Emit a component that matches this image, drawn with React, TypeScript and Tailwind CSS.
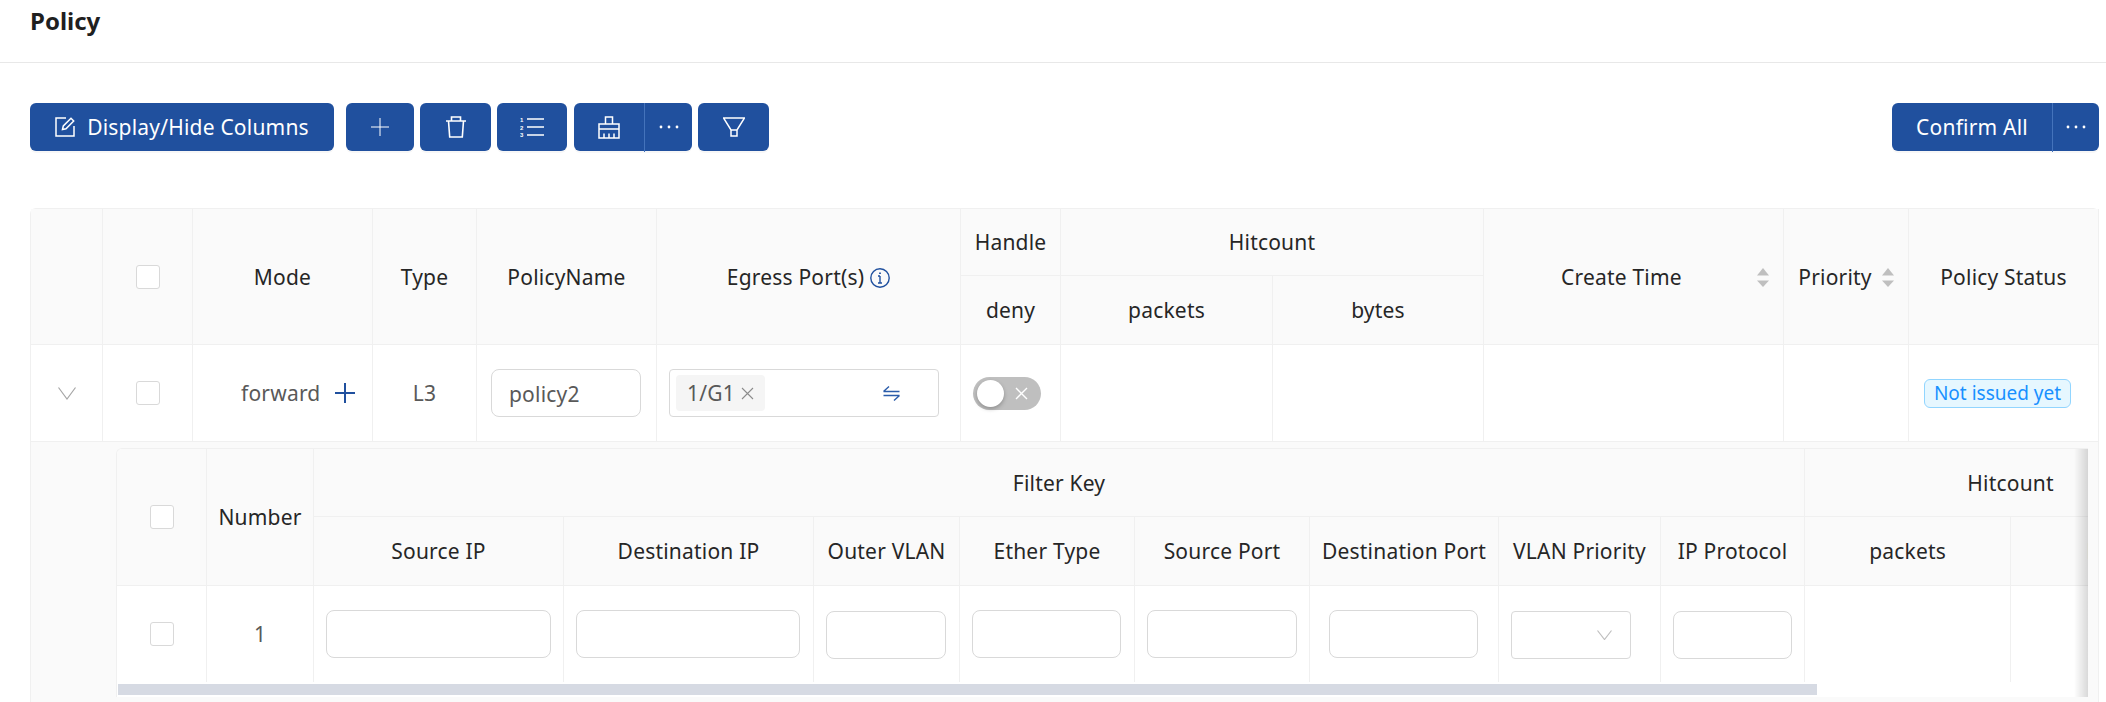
import React from "react";

const outerCols = [72, 90, 180, 104, 180, 304, 100, 212, 211, 300, 125, 190];
const innerCols = [90, 107, 250, 250, 146, 175, 175, 189, 162, 144, 206, 206];

const thBox = "bg-[#fafafa] border-r border-b border-[#f0f0f0] font-normal text-center p-0";
const th = "bg-[#fafafa] border-r border-b border-[#f0f0f0] font-normal text-[21px] tracking-[0.2px] text-[#262626] text-center p-0 pt-[2px] whitespace-nowrap";
const td = "border-r border-b border-[#f0f0f0] text-[21px] tracking-[0.2px] text-[#595959] p-0";
const btn = "h-[48px] bg-[#20509e] rounded-[6px] shadow-[0_2px_0_rgba(0,0,0,0.03)] text-white flex items-center justify-center";

// campos de la tabla anidada
const filterInputs = [
	{ key: "source-ip", cls: "ml-[12px] w-[225px] h-[48px]" },
	{ key: "dest-ip", cls: "ml-[12px] w-[224px] h-[48px]" },
	{ key: "outer-vlan", cls: "ml-[12px] w-[120px] h-[48px] mt-[2px]" },
	{ key: "ether-type", cls: "ml-[12px] w-[149px] h-[48px]" },
	{ key: "source-port", cls: "ml-[12px] w-[150px] h-[48px]" },
	{ key: "dest-port", cls: "ml-[19px] w-[149px] h-[48px]" },
];

function Checkbox() {
	return <span className="block mx-auto w-[24px] h-[24px] bg-white border border-[#d9d9d9] rounded-[3px]" />;
}

function Input({ className, value }: { className: string; value?: string }) {
	return (
		<input
			readOnly
			value={value ?? ""}
			className={`block bg-white border border-[#d9d9d9] rounded-[8px] text-[21px] tracking-[0.2px] text-[#595959] px-[17px] pt-[2px] outline-none ${className}`}
		/>
	);
}

function SortArrows() {
	return (
		<svg width="12" height="19" viewBox="0 0 12 19" className="fill-[#bfbfbf]">
			<path d="M6 0 12 7.5H0Z" />
			<path d="M0 12.5H12L6 19Z" />
		</svg>
	);
}

function Dots() {
	return (
		<svg width="20" height="4" viewBox="0 0 20 4" className="fill-white">
			<circle cx="2" cy="2" r="1.4" />
			<circle cx="10" cy="2" r="1.4" />
			<circle cx="18" cy="2" r="1.4" />
		</svg>
	);
}

function Toolbar() {
	return (
		<div className="flex items-start justify-between pl-[30px] pr-[7px] pt-[40px]">
			<div className="flex">
				<div className={`${btn} w-[304px] gap-[12px] text-[21px] tracking-[0.2px]`}>
					<svg width="20" height="20" viewBox="0 0 20 20" fill="none" stroke="white" strokeWidth="1.5">
						<path d="M11 1H1V19H19V9" />
						<path d="M7.5 12.5 8.3 9 16 1.3 18.7 4 11 11.7Z" />
					</svg>
					<span className="pt-[2px]">Display/Hide Columns</span>
				</div>
				<div className={`${btn} w-[68px] ml-[12px]`}>
					<svg width="18" height="18" viewBox="0 0 18 18" stroke="white" strokeWidth="1">
						<path d="M9 0V18M0 9H18" />
					</svg>
				</div>
				<div className={`${btn} w-[71px] ml-[6px]`}>
					<svg width="20" height="22" viewBox="0 0 20 22" fill="none" stroke="white" strokeWidth="1.6">
						<path d="M0 5H20M5.5 5V1H14.5V5M2.5 5 3.7 21H16.3L17.5 5" />
					</svg>
				</div>
				<div className={`${btn} w-[70px] ml-[6px]`}>
					<svg width="24" height="20" viewBox="0 0 24 20" stroke="white" strokeWidth="1.5" fill="white">
						<path d="M7 2H24M7 10H24M7 18H24" />
						<text x="0" y="5" fontSize="6" fontWeight="700" stroke="none" fontFamily="Liberation Sans">1</text>
						<text x="0" y="12.5" fontSize="6" fontWeight="700" stroke="none" fontFamily="Liberation Sans">2</text>
						<text x="0" y="20" fontSize="6" fontWeight="700" stroke="none" fontFamily="Liberation Sans">3</text>
					</svg>
				</div>
				<div className={`${btn} w-[118px] ml-[7px] relative`}>
					<div className="w-[70px] flex items-center justify-center">
						<svg width="22" height="23" viewBox="0 0 22 23" fill="none" stroke="white" strokeWidth="1.5">
							<path d="M7.5 8V1H14.5V8M1 13V8H21V13M1 22V13H21V22ZM6 22V17.5M11 22V17.5M16 22V17.5" />
						</svg>
					</div>
					<div className="w-[48px] h-[49px] border-l border-[#4473bb] flex items-center justify-center">
						<Dots />
					</div>
				</div>
				<div className={`${btn} w-[71px] ml-[6px]`}>
					<svg width="22" height="20" viewBox="0 0 22 20" fill="none" stroke="white" strokeWidth="1.5">
						<path d="M0.5 1H21.5L14 13H8ZM8 13V19H14V13" />
					</svg>
				</div>
			</div>
			<div className={`${btn} w-[207px] text-[21px] tracking-[0.2px]`}>
				<div className="w-[160px] text-center pt-[2px]">Confirm All</div>
				<div className="w-[47px] h-[49px] border-l border-[#4473bb] flex items-center justify-center">
					<Dots />
				</div>
			</div>
		</div>
	);
}

function SubTable() {
	return (
		<div className="relative ml-[85px] mt-[6px] w-[1972px] overflow-hidden border-l border-t border-[#f0f0f0] rounded-tl-[6px] bg-white">
			<table className="table-fixed border-separate border-spacing-0 w-[2100px]">
				<colgroup>
					{innerCols.map((w, i) => (
						<col key={i} style={{ width: w }} />
					))}
				</colgroup>
				<thead>
					<tr className="h-[68px]">
						<th rowSpan={2} className={thBox}>
							<Checkbox />
						</th>
						<th rowSpan={2} className={th}>Number</th>
						<th colSpan={8} className={th}>Filter Key</th>
						<th colSpan={2} className={th}>Hitcount</th>
					</tr>
					<tr className="h-[69px]">
						<th className={th}>Source IP</th>
						<th className={th}>Destination IP</th>
						<th className={th}>Outer VLAN</th>
						<th className={th}>Ether Type</th>
						<th className={th}>Source Port</th>
						<th className={th}>Destination Port</th>
						<th className={th}>VLAN Priority</th>
						<th className={th}>IP Protocol</th>
						<th className={th}>packets</th>
						<th className={th}>bytes</th>
					</tr>
				</thead>
				<tbody>
					<tr className="h-[96px]">
						<td className="border-r border-[#f0f0f0] p-0">
							<Checkbox />
						</td>
						<td className="border-r border-[#f0f0f0] p-0 pt-[2px] text-[21px] text-[#595959] text-center">1</td>
						{filterInputs.map((f) => (
							<td key={f.key} className="border-r border-[#f0f0f0] p-0">
								<Input className={f.cls} />
							</td>
						))}
						<td className="border-r border-[#f0f0f0] p-0">
							<div className="ml-[12px] mt-[2px] w-[120px] h-[48px] bg-white border border-[#d9d9d9] rounded-[4px] flex items-center justify-end pr-[18px]">
								<svg width="15" height="10" viewBox="0 0 15 10" fill="none" stroke="#bfbfbf" strokeWidth="1.2">
									<path d="M0.5 0.5 7.5 9.5 14.5 0.5" />
								</svg>
							</div>
						</td>
						<td className="border-r border-[#f0f0f0] p-0">
							<Input className="ml-[12px] mt-[2px] w-[119px] h-[48px]" />
						</td>
						<td className="border-r border-[#f0f0f0] p-0" />
						<td className="border-r border-[#f0f0f0] p-0" />
					</tr>
				</tbody>
			</table>
			<div className="h-[15px] pt-[2px] bg-white">
				<div className="ml-[1px] w-[1699px] h-[11px] bg-[#d6dae3]" />
			</div>
			<div className="absolute top-0 right-0 bottom-0 w-[14px] bg-linear-to-l from-black/15 to-transparent" />
		</div>
	);
}

export default function App() {
	return (
		<div className="h-[702px] overflow-hidden bg-white font-['Noto_Sans','Liberation_Sans',sans-serif]">
			<div className="h-[63px] border-b border-[#e8e8e8] pl-[30px] pt-[1px] text-[24px] leading-[40px] font-bold text-[#1f1f1f]">
				Policy
			</div>
			<Toolbar />
			<div className="ml-[30px] mt-[57px] w-[2069px] border-l border-t border-[#f0f0f0] rounded-t-[6px]">
				<table className="table-fixed border-separate border-spacing-0 w-[2068px]">
					<colgroup>
						{outerCols.map((w, i) => (
							<col key={i} style={{ width: w }} />
						))}
					</colgroup>
					<thead>
						<tr className="h-[67px]">
							<th rowSpan={2} className={thBox} />
							<th rowSpan={2} className={thBox}>
								<Checkbox />
							</th>
							<th rowSpan={2} className={th}>Mode</th>
							<th rowSpan={2} className={th}>Type</th>
							<th rowSpan={2} className={th}>PolicyName</th>
							<th rowSpan={2} className={th}>
								<span className="inline-flex items-center gap-[6px]">
									Egress Port(s)
									<svg width="20" height="20" viewBox="0 0 20 20" fill="none" stroke="#20509e" strokeWidth="1.4">
										<circle cx="10" cy="10" r="9.2" />
										<path d="M10 8V15M8 8H10M8 15H12" />
										<path d="M10 4.5V6" strokeWidth="1.8" />
									</svg>
								</span>
							</th>
							<th className={th}>Handle</th>
							<th colSpan={2} className={th}>Hitcount</th>
							<th rowSpan={2} className={th}>
								<div className="flex items-center pl-[77px]">
									<span className="w-[196px] text-left">Create Time</span>
									<SortArrows />
								</div>
							</th>
							<th rowSpan={2} className={th}>
								<div className="flex items-center justify-center gap-[10px]">
									Priority
									<SortArrows />
								</div>
							</th>
							<th rowSpan={2} className={th}>Policy Status</th>
						</tr>
						<tr className="h-[69px]">
							<th className={th}>deny</th>
							<th className={th}>packets</th>
							<th className={th}>bytes</th>
						</tr>
					</thead>
					<tbody>
						<tr className="h-[97px]">
							<td className={td}>
								<svg width="18" height="13" viewBox="0 0 18 13" fill="none" stroke="#a6a6a6" strokeWidth="1.2" className="ml-[27px]">
									<path d="M0.5 0.5 9 12 17.5 0.5" />
								</svg>
							</td>
							<td className={td}>
								<Checkbox />
							</td>
							<td className={td}>
								<div className="flex items-center pl-[48px] gap-[15px]">
									<span className="pt-[2px]">forward</span>
									<svg width="20" height="20" viewBox="0 0 20 20" stroke="#20509e" strokeWidth="2">
										<path d="M10 0V20M0 10H20" />
									</svg>
								</div>
							</td>
							<td className={`${td} text-center pt-[2px]`}>L3</td>
							<td className={td}>
								<Input className="ml-[14px] w-[150px] h-[48px]" value="policy2" />
							</td>
							<td className={td}>
								<div className="ml-[12px] w-[270px] h-[48px] bg-white border border-[#d9d9d9] rounded-[4px] flex items-center justify-between pl-[6px] pr-[38px]">
									<span className="h-[36px] w-[89px] bg-[#f5f5f5] rounded-[4px] flex items-center justify-center gap-[6px]">
										<span className="pt-[2px]">1/G1</span>
										<svg width="13" height="13" viewBox="0 0 13 13" stroke="#8c8c8c" strokeWidth="1.1">
											<path d="M1 1 12 12M12 1 1 12" />
										</svg>
									</span>
									<svg width="17" height="15" viewBox="0 0 17 15" fill="none" stroke="#2a5caa" strokeWidth="1.4">
										<path d="M0.5 5.5H16.5M0.5 5.5 6 0.5M0.5 9.5H16.5M16.5 9.5 11 14.5" />
									</svg>
								</div>
							</td>
							<td className={td}>
								<div className="ml-[12px] w-[68px] h-[33px] bg-[#bfbfbf] rounded-full relative flex items-center justify-end pr-[13px]">
									<span className="absolute left-[4px] top-[3px] w-[27px] h-[27px] rounded-full bg-white shadow-[0_2px_4px_rgba(0,0,0,0.25)]" />
									<svg width="13" height="13" viewBox="0 0 13 13" stroke="white" strokeWidth="1.4">
										<path d="M1 1 12 12M12 1 1 12" />
									</svg>
								</div>
							</td>
							<td className={td} />
							<td className={td} />
							<td className={td} />
							<td className={td} />
							<td className={td}>
								<span className="ml-[15px] inline-block w-[147px] h-[29px] leading-[26px] text-center text-[19px] tracking-normal text-[#1890ff] bg-[#e6f7ff] border border-[#91d5ff] rounded-[6px]">
									Not issued yet
								</span>
							</td>
						</tr>
						<tr>
							<td colSpan={12} className="bg-[#fafafa] border-r border-[#f0f0f0] p-0 align-top">
								<SubTable />
								<div className="h-[20px]" />
							</td>
						</tr>
					</tbody>
				</table>
			</div>
		</div>
	);
}
